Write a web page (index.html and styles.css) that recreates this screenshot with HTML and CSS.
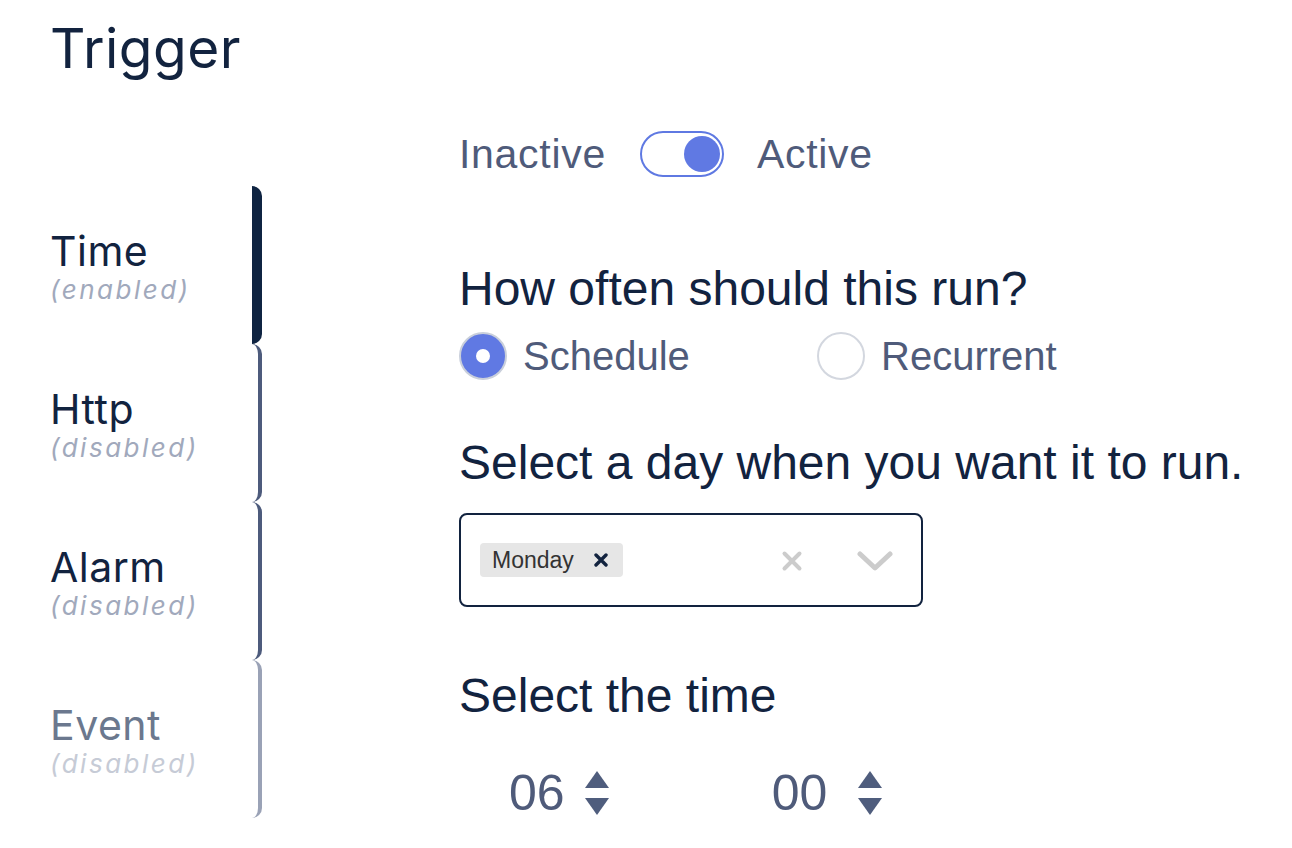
FILE: index.html
```html
<!DOCTYPE html>
<html lang="en">
<head>
<meta charset="utf-8">
<title>Trigger</title>
<link rel="stylesheet" href="styles.css">
</head>
<body>
<div class="page">
  <h1 class="title">Trigger</h1>
  <div class="layout">
    <nav class="tabs">
      <div class="tab tab-active">
        <div class="tab-name">Time</div>
        <div class="tab-state">(enabled)</div>
      </div>
      <div class="tab">
        <div class="tab-name">Http</div>
        <div class="tab-state">(disabled)</div>
      </div>
      <div class="tab">
        <div class="tab-name">Alarm</div>
        <div class="tab-state">(disabled)</div>
      </div>
      <div class="tab tab-muted">
        <div class="tab-name">Event</div>
        <div class="tab-state">(disabled)</div>
      </div>
    </nav>
    <main class="content">
      <div class="toggle-row">
        <span class="toggle-label">Inactive</span>
        <span class="toggle"><span class="knob"></span></span>
        <span class="toggle-label">Active</span>
      </div>

      <h2 class="question q-first">How often should this run?</h2>
      <div class="radio-row">
        <label class="radio-option">
          <span class="radio radio-on"><span class="radio-dot"></span></span>
          <span class="radio-label">Schedule</span>
        </label>
        <label class="radio-option">
          <span class="radio"></span>
          <span class="radio-label">Recurrent</span>
        </label>
      </div>

      <h2 class="question q-day">Select a day when you want it to run.</h2>
      <div class="select">
        <span class="tag">
          <span class="tag-text">Monday</span>
          <svg class="tag-x" width="14" height="14" viewBox="0 0 14 14"><path d="M2 2 L12 12 M12 2 L2 12" stroke="#12233f" stroke-width="3.4" stroke-linecap="round" fill="none"/></svg>
        </span>
        <span class="select-spacer"></span>
        <svg class="clear-x" width="22" height="22" viewBox="0 0 22 22"><path d="M3.5 3.5 L18.5 18.5 M18.5 3.5 L3.5 18.5" stroke="#cccccc" stroke-width="4" stroke-linecap="round" fill="none"/></svg>
        <svg class="chevron" width="36" height="22" viewBox="0 0 36 22"><polyline points="3,4 18,18 33,4" stroke="#cccccc" stroke-width="5" stroke-linecap="round" stroke-linejoin="round" fill="none"/></svg>
      </div>

      <h2 class="question q-time">Select the time</h2>
      <div class="time-row">
        <div class="time-field time-hours">
          <span class="time-num">06</span>
          <svg class="spin" width="24" height="44" viewBox="0 0 24 44"><polygon points="12,0 24,17 0,17" fill="#4f5d7d"/><polygon points="0,27 24,27 12,44" fill="#4f5d7d"/></svg>
        </div>
        <div class="time-field time-mins">
          <span class="time-num">00</span>
          <svg class="spin" width="24" height="44" viewBox="0 0 24 44"><polygon points="12,0 24,17 0,17" fill="#4f5d7d"/><polygon points="0,27 24,27 12,44" fill="#4f5d7d"/></svg>
        </div>
      </div>
    </main>
  </div>
</div>
</body>
</html>
```

FILE: styles.css
```css
* { box-sizing: border-box; }
html, body { margin: 0; padding: 0; background: #ffffff; }
body { font-family: "Liberation Sans", Arial, sans-serif; color: #12233f; }

.page {
  width: 1292px;
  height: 848px;
  padding: 21px 0 0 50px;
  overflow: hidden;
}

.title {
  margin: 0;
  font-family: Inter, "Noto Sans", sans-serif;
  font-weight: 400;
  font-size: 55px;
  line-height: 55px;
  letter-spacing: 0.5px;
  color: #12233f;
}

.layout {
  display: flex;
  margin-top: 55px;
}

/* Sidebar tabs */
.tabs {
  width: 212px;
  margin-top: 55px;
  display: flex;
  flex-direction: column;
}
.tab {
  height: 158px;
  padding-top: 45px;
  border-right: 4px solid #4d5b7c;
  border-radius: 0 10px 10px 0;
  font-family: Inter, "Noto Sans", sans-serif;
}
.tab-active { border-right: 10px solid #0f2442; }
.tab-muted { border-right-color: #9aa2b6; }
.tab-name {
  font-size: 41px;
  line-height: 41px;
  letter-spacing: 0.5px;
  color: #12233f;
}
.tab-state {
  margin-top: 5px;
  font-size: 26px;
  line-height: 26px;
  font-style: italic;
  letter-spacing: 2.5px;
  color: #a1a9bc;
}
.tab-muted .tab-name { color: #6b788e; }
.tab-muted .tab-state { color: #c6cbd6; }

/* Content */
.content {
  margin-left: 197px;
  display: flex;
  flex-direction: column;
  align-items: flex-start;
}

.toggle-row {
  display: flex;
  align-items: center;
  height: 46px;
}
.toggle-label {
  font-size: 41px;
  line-height: 46px;
  letter-spacing: 0.7px;
  color: #4f5b7a;
}
.toggle {
  display: flex;
  justify-content: flex-end;
  align-items: center;
  width: 84px;
  height: 46px;
  margin: 0 33px 0 34px;
  padding: 0 2px;
  border: 2px solid #5f79e2;
  border-radius: 23px;
}
.knob {
  width: 36px;
  height: 36px;
  border-radius: 50%;
  background: #6079e3;
}

.question {
  margin: 0;
  font-weight: 400;
  font-size: 48px;
  line-height: 48px;
  color: #12233f;
}
.q-first { margin-top: 88px; }
.q-day { margin-top: 59px; }
.q-time { margin-top: 65px; }

.radio-row {
  display: flex;
  margin-top: 19px;
  height: 48px;
}
.radio-option {
  display: flex;
  align-items: center;
  width: 358px;
}
.radio {
  display: flex;
  align-items: center;
  justify-content: center;
  width: 48px;
  height: 48px;
  border-radius: 50%;
  border: 2px solid #d3d7df;
  background: #ffffff;
}
.radio-on {
  background: #6079e3;
  border: 2px solid #c9cfdb;
}
.radio-dot {
  width: 14px;
  height: 14px;
  border-radius: 50%;
  background: #ffffff;
}
.radio-label {
  margin-left: 16px;
  font-size: 40px;
  line-height: 48px;
  color: #4f5b7a;
}

.select {
  display: flex;
  align-items: center;
  width: 464px;
  height: 94px;
  margin-top: 26px;
  padding: 0 28px 0 19px;
  border: 2px solid #12233f;
  border-radius: 8px;
}
.tag {
  display: flex;
  align-items: center;
  height: 34px;
  padding: 0 15px 0 12px;
  background: #e6e6e6;
  border-radius: 4px;
}
.tag-text {
  font-size: 23px;
  color: #333333;
}
.tag-x { margin-left: 20px; }
.select-spacer { flex: 1; }
.clear-x { margin-top: 1px; }
.chevron { margin-left: 54px; margin-top: 2px; }

.time-row {
  display: flex;
  margin-top: 48px;
  height: 50px;
}
.time-field {
  display: flex;
  align-items: center;
}
.time-hours { margin-left: 50px; }
.time-mins { margin-left: 163px; }
.time-num {
  font-size: 50px;
  line-height: 50px;
  color: #4f5b7a;
}
.time-hours .spin { margin-left: 20px; }
.time-mins .spin { margin-left: 31px; }
```
